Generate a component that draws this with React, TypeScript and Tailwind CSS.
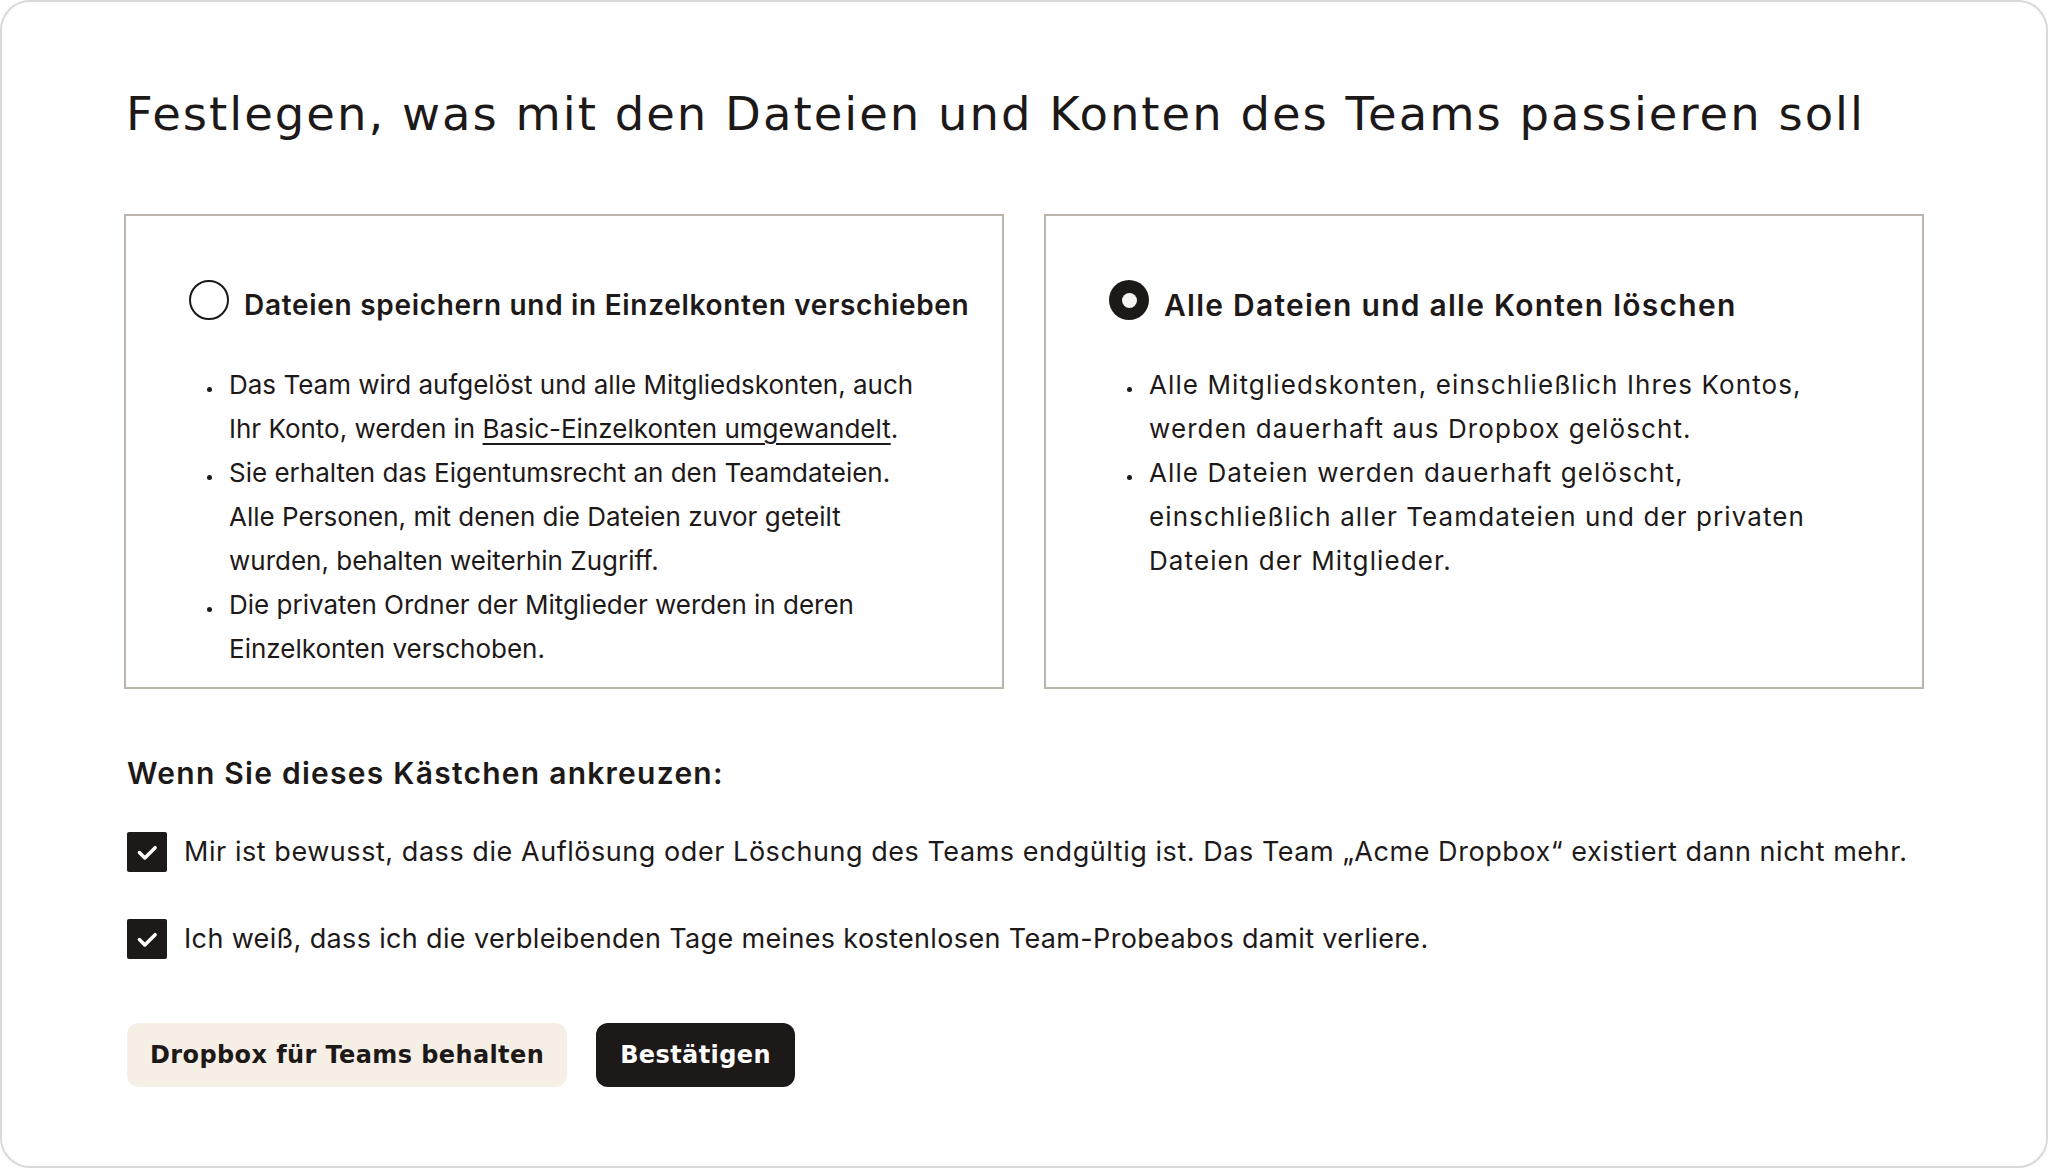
import React from 'react';

// Dialog: Team auflösen – Auswahl, Bestätigung, Aktionen

const Bullet: React.FC<{ children: React.ReactNode }> = ({ children }) => (
  <li className="flex">
    <div className="w-10 h-[44px] shrink-0 flex items-center justify-center">
      <span className="mt-[9px] w-[5px] h-[5px] rounded-full bg-[#1e1919]" />
    </div>
    <p className="whitespace-nowrap">{children}</p>
  </li>
);

const Radio: React.FC<{ checked?: boolean }> = ({ checked }) =>
  checked ? (
    <div className="w-10 h-10 shrink-0 rounded-full bg-[#1e1919] flex items-center justify-center">
      <div className="w-[15px] h-[15px] rounded-full bg-[#f7f5f2]" />
    </div>
  ) : (
    <div className="w-10 h-10 shrink-0 rounded-full border-2 border-[#1e1919] bg-white" />
  );

const Check: React.FC = () => (
  <div className="w-10 h-10 shrink-0 rounded-[2px] bg-[#1e1919] flex items-center justify-center">
    <svg width="26" height="26" viewBox="0 0 24 24" fill="none">
      <path d="M5 12.5 L10 17.5 L19.5 8" stroke="#ffffff" strokeWidth="3.2" strokeLinecap="round" strokeLinejoin="round" />
    </svg>
  </div>
);

const Option: React.FC<{ checked?: boolean; title: string; children: React.ReactNode }> = ({ checked, title, children }) => (
  <div className="border-2 border-[#bbb5ac] pl-[63px] pt-[64px] pb-[16px]">
    <div className="flex items-start gap-[15px]">
      <Radio checked={checked} />
      <span
        className={
          checked
            ? 'pt-[5px] text-[30px] leading-[40px] tracking-[1.25px] font-semibold whitespace-nowrap'
            : 'pt-[5px] text-[28px] leading-[40px] tracking-[0.7px] font-semibold whitespace-nowrap'
        }
      >
        {title}
      </span>
    </div>
    <ul className={checked ? 'mt-[38px] text-[26px] leading-[44px] tracking-[1.1px]' : 'mt-[38px] text-[26px] leading-[44px]'}>
      {children}
    </ul>
  </div>
);

export default function App() {
  return (
    <div className="w-[2048px] h-[1168px] bg-white border-2 border-[#d9d9d9] rounded-[30px] px-[122px] pt-[84px] text-[#1e1919] font-['Inter',sans-serif]">
      <h1 className="pl-[2px] text-[46.5px] leading-[56px] tracking-[2px] font-normal font-['DejaVu_Sans',sans-serif] whitespace-nowrap">
        Festlegen, was mit den Dateien und Konten des Teams passieren soll
      </h1>

      <div className="mt-[72px] grid grid-cols-2 gap-[40px]">
        <Option title="Dateien speichern und in Einzelkonten verschieben">
          <Bullet>
            Das Team wird aufgelöst und alle Mitgliedskonten, auch
            <br />
            Ihr Konto, werden in{' '}
            <a className="underline decoration-[1.5px] underline-offset-[5px]">Basic-Einzelkonten umgewandelt</a>.
          </Bullet>
          <Bullet>
            Sie erhalten das Eigentumsrecht an den Teamdateien.
            <br />
            Alle Personen, mit denen die Dateien zuvor geteilt
            <br />
            wurden, behalten weiterhin Zugriff.
          </Bullet>
          <Bullet>
            Die privaten Ordner der Mitglieder werden in deren
            <br />
            Einzelkonten verschoben.
          </Bullet>
        </Option>
        <Option checked title="Alle Dateien und alle Konten löschen">
          <Bullet>
            Alle Mitgliedskonten, einschließlich Ihres Kontos,
            <br />
            werden dauerhaft aus Dropbox gelöscht.
          </Bullet>
          <Bullet>
            Alle Dateien werden dauerhaft gelöscht,
            <br />
            einschließlich aller Teamdateien und der privaten
            <br />
            Dateien der Mitglieder.
          </Bullet>
        </Option>
      </div>

      <div className="pl-[3px]">
        <h2 className="mt-[64px] text-[30px] leading-[40px] tracking-[1.25px] font-semibold">Wenn Sie dieses Kästchen ankreuzen:</h2>

        <div className="mt-[39px] flex flex-col gap-[47px] text-[27px] leading-[40px]">
          <label className="flex items-center gap-[17px] tracking-[0.55px]">
            <Check />
            <span className="whitespace-nowrap">
              Mir ist bewusst, dass die Auflösung oder Löschung des Teams endgültig ist. Das Team „Acme Dropbox“ existiert dann nicht mehr.
            </span>
          </label>
          <label className="flex items-center gap-[17px] tracking-[0.35px]">
            <Check />
            <span className="whitespace-nowrap">
              Ich weiß, dass ich die verbleibenden Tage meines kostenlosen Team-Probeabos damit verliere.
            </span>
          </label>
        </div>

        <div className="mt-[64px] flex gap-[29px] font-['DejaVu_Sans',sans-serif] text-[24px] tracking-[0.4px] font-bold">
          <button className="h-[64px] px-[23px] rounded-[12px] bg-[#f5efe5] text-[#1e1919]">Dropbox für Teams behalten</button>
          <button className="h-[64px] px-[24px] rounded-[12px] bg-[#1e1919] text-white">Bestätigen</button>
        </div>
      </div>
    </div>
  );
}
